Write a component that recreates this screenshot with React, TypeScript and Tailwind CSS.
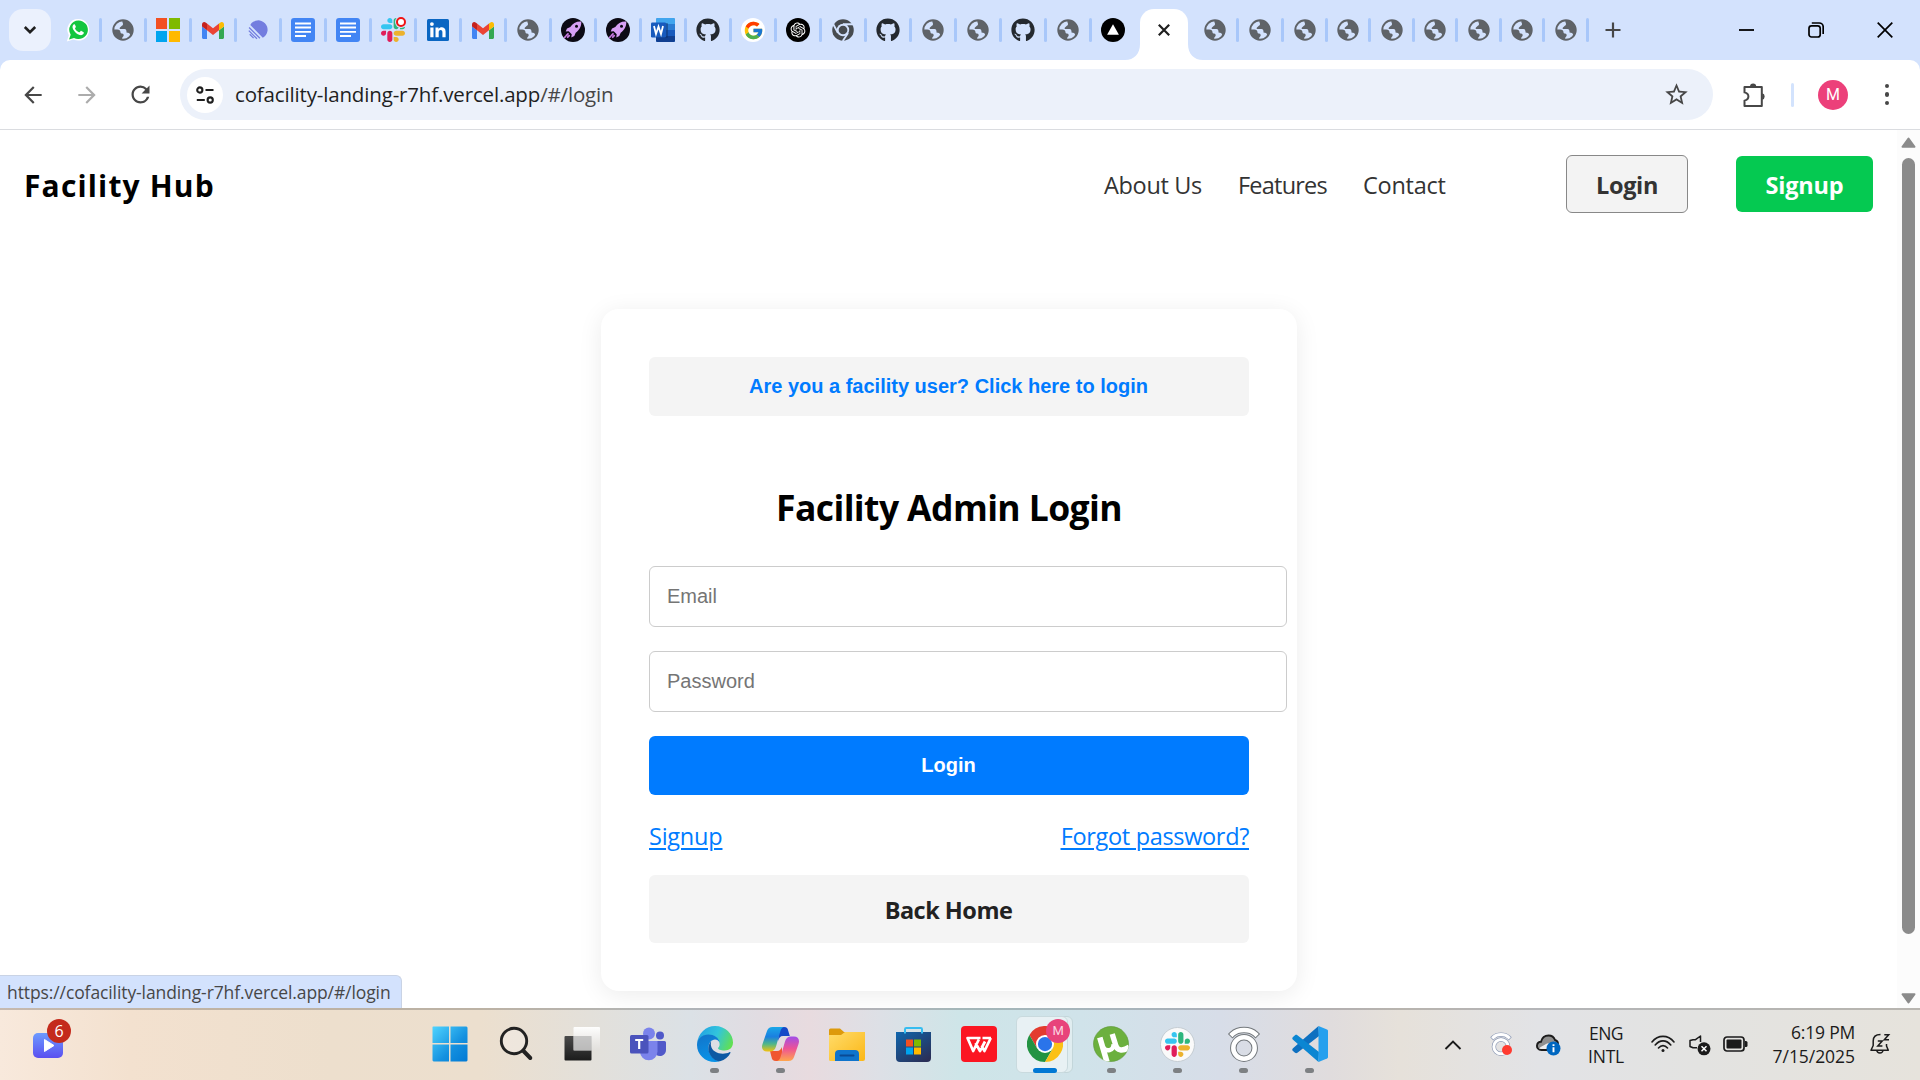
import type { ReactNode } from "react";
import { FaGithub, FaRocket } from "react-icons/fa";
import { FcGoogle } from "react-icons/fc";
import { RiOpenaiFill } from "react-icons/ri";
import { MdArrowBack, MdArrowForward, MdRefresh, MdStarOutline } from "react-icons/md";

/* ---------- favicons ---------- */

const Globe = () => (
  <svg width="22" height="22" viewBox="0 0 22 22">
    <circle cx="11" cy="11" r="9.7" fill="none" stroke="#5f6368" strokeWidth="2" />
    <path
      d="M10.6 1.2c5.6-.3 10.1 4.1 10.2 9.4.1 2.6-1 5-2.3 6.6-.2-2.2-1-3.3-2.6-3.5l-1.4-.1c.2-2-.4-3.3-2-3.5H8.6c-1 0-1.3-1-.6-1.7L9.6 6.9c1-.2 1.5-.9 1.4-2.1 0-1.3-1.3-1.7-.4-3.6z"
      fill="#5f6368"
    />
    <path
      d="M1.3 10.5h3.9c2.2 0 3.3 1.3 3.3 2.7 0 .9.6 1.2 1.5 1.2 1.2.1 1.7.8 1.7 1.9 0 1.4-1.3 1.5-1.5 2.7l-.2 1.5C4.8 20 1.3 15.7 1.3 10.5z"
      fill="#5f6368"
    />
  </svg>
);

const WhatsApp = () => (
  <svg width="24" height="24" viewBox="0 0 24 24">
    <path d="M12.5 1a10.8 10.8 0 1 1-5 20.4L.8 23.4l2-6.2A10.8 10.8 0 0 1 12.5 1z" fill="#fff" />
    <path d="M12.5 2.5a9.3 9.3 0 1 1-4.5 17.4l-5 1.6 1.7-4.8A9.3 9.3 0 0 1 12.5 2.5z" fill="#14c63f" />
    <path
      d="M9 6.8c-.4-.6-.9-.6-1.4-.2-1.4 1.2-1.4 3-.4 4.8 1.5 2.7 3.7 4.6 6.6 5.6 1.7.5 3.6-.3 4-2 .2-.8 0-.9-2.4-2.1-.4-.2-.8 0-1.5 1.1-.3.4-.6.3-1.4 0-1.7-.8-2.9-2.1-3.5-3.4-.2-.5.9-1.1.9-1.8z"
      fill="#fff"
    />
  </svg>
);

const Microsoft = () => (
  <span className="grid size-6 grid-cols-2 gap-[2px]">
    <i className="bg-[#f25022]" />
    <i className="bg-[#7fba00]" />
    <i className="bg-[#00a4ef]" />
    <i className="bg-[#ffb900]" />
  </span>
);

const Gmail = () => (
  <svg width="22" height="17" viewBox="52 42 88 66" preserveAspectRatio="none">
    <path fill="#4285f4" d="M58 108h14V74L52 59v43c0 3.32 2.69 6 6 6" />
    <path fill="#34a853" d="M120 108h14c3.32 0 6-2.69 6-6V59l-20 15" />
    <path fill="#fbbc04" d="M120 48v26l20-15v-8c0-7.42-8.47-11.65-14.4-7.2" />
    <path fill="#ea4335" d="M72 74V48l24 18 24-18v26L96 92" />
    <path fill="#c5221f" d="M52 51v8l20 15V48l-5.6-4.2c-5.94-4.45-14.4-.22-14.4 7.2" />
  </svg>
);

const Linear = () => (
  <svg width="20" height="20" viewBox="0 0 20 20">
    <path d="M2.3 4.9A9.3 9.3 0 1 1 14.8 17.8z" fill="#737ddf" />
    <path d="M1.1 7.5l10.8 10.8M.8 10.6l8.2 8.2M1.7 14.2l3.9 3.9" stroke="#737ddf" strokeWidth="1.3" />
  </svg>
);

const Docs = () => (
  <svg width="24" height="24" viewBox="0 0 24 24">
    <rect width="24" height="24" rx="3" fill="#4285f4" />
    <path d="M4 5.5h16M4 9.5h16M4 13.9h16M4 18h11" stroke="#fff" strokeWidth="1.9" />
  </svg>
);

const slackArm =
  "M25.8 77.6c0 7.1-5.8 12.9-12.9 12.9S0 84.7 0 77.6s5.8-12.9 12.9-12.9h12.9v12.9zm6.5 0c0-7.1 5.8-12.9 12.9-12.9s12.9 5.8 12.9 12.9v32.3c0 7.1-5.8 12.9-12.9 12.9s-12.9-5.8-12.9-12.9V77.6z";

const SlackMark = ({ size }: { size: number }) => (
  <svg width={size} height={size} viewBox="0 0 122.8 122.8">
    <path d={slackArm} fill="#e01e5a" />
    <path d={slackArm} fill="#36c5f0" transform="rotate(90 61.4 61.4)" />
    <path d={slackArm} fill="#2eb67d" transform="rotate(180 61.4 61.4)" />
    <path d={slackArm} fill="#ecb22e" transform="rotate(270 61.4 61.4)" />
  </svg>
);

const SlackTab = () => (
  <span className="relative flex size-6">
    <SlackMark size={24} />
    <span className="absolute -top-[1px] right-[-1px] size-[10px] rounded-full border-2 border-[#f01414] bg-white ring-1 ring-[#d3e2fd]" />
  </span>
);

const LinkedIn = () => (
  <svg width="22" height="22" viewBox="0 0 22 22">
    <rect width="22" height="22" rx="1.5" fill="#0a66c2" />
    <path d="M3.3 8.5h3.2v9.8H3.3zM8.5 8.5h3v1.4c1.6-2.6 7.1-2.5 7.1 2.6v5.8h-3.2v-5c0-3.3-3.7-3-3.7 0v5H8.5z" fill="#fff" />
    <circle cx="4.9" cy="5.1" r="1.9" fill="#fff" />
  </svg>
);

const Rocket = () => (
  <span className="flex size-6 items-center justify-center rounded-full bg-[#0c0a14]">
    <svg width="20" height="20" viewBox="0 0 20 20">
      <path d="M18.3 1.5c-5-.3-8.600 1.600-11 5.500L4 8.500l-1.300 3 3-.3 3 3-.4 3.200 3-1.400 1.400-3.300c3.700-2.600 5.800-6.200 5.600-11.200z" fill="#d7a0f5" />
      <circle cx="13.500" cy="6.300" r="1.500" fill="#0c0a14" />
      <path d="M5 13.800l-1.500 1.500M6.200 15.600l-1.500 1.600M2.500 16.500l-.9 1" stroke="#c77ae0" strokeWidth="1.800" strokeLinecap="round" />
    </svg>
  </span>
);

const Word = () => (
  <svg width="24" height="24" viewBox="0 0 24 24">
    <rect x="5" width="19" height="24" rx="1.5" fill="#2b7cd3" />
    <path d="M6.5 0h16A1.5 1.5 0 0 1 24 1.5V6H5V1.5A1.5 1.5 0 0 1 6.5 0z" fill="#41a5ee" />
    <path d="M5 12h19v6H5z" fill="#185abd" />
    <path d="M5 18h19v4.5a1.5 1.5 0 0 1-1.5 1.5h-16A1.5 1.5 0 0 1 5 22.500z" fill="#103f91" />
    <path d="M5 5h11a1 1 0 0 1 1 1v13a1 1 0 0 1-1 1H5z" fill="#0b2f6b" opacity=".5" />
    <rect y="4.5" width="15" height="15" rx="1.3" fill="#185abd" />
    <path d="M3 8l2 8 2.500-7.500L10 16l2-8" fill="none" stroke="#fff" strokeWidth="1.8" />
  </svg>
);

const Github = () => <FaGithub size={24} color="#24292f" />;

const Google = () => (
  <span className="flex size-6 items-center justify-center rounded-full bg-white">
    <FcGoogle size={21} />
  </span>
);

const OpenAI = () => (
  <span className="flex size-6 items-center justify-center rounded-full bg-black">
    <RiOpenaiFill size={18} color="#fff" />
  </span>
);

const ChromeGray = () => (
  <svg width="22" height="22" viewBox="0 0 48 48">
    <circle cx="24" cy="24" r="23.5" fill="#474b4f" />
    <circle cx="24" cy="24" r="13.5" fill="#d3e2fd" />
    <path d="M24 11.5H47M13 30.5L2.5 11M35 30.5L23.5 48" stroke="#d3e2fd" strokeWidth="4" />
    <circle cx="24" cy="24" r="9.5" fill="#474b4f" />
  </svg>
);

const Vercel = () => (
  <svg width="24" height="24" viewBox="0 0 24 24">
    <circle cx="12" cy="12" r="12" fill="#000" />
    <path d="M12 6.2l5.900 10.600H6.100z" fill="#fff" />
  </svg>
);

const leftTabs: (() => ReactNode)[] = [
  WhatsApp, Globe, Microsoft, Gmail, Linear, Docs, Docs, SlackTab, LinkedIn, Gmail, Globe, Rocket,
  Rocket, Word, Github, Google, OpenAI, ChromeGray, Github, Globe, Globe, Github, Globe, Vercel,
];
const rightTabs = [45, 45, 44, 43, 44, 43, 44, 43, 44];

function TabStrip() {
  return (
    <div className="flex h-[60px] bg-[#d3e2fd]">
      <div className="mt-[9px] ml-[9px] flex size-[42px] items-center justify-center rounded-[14px] bg-[#ebf1fd]">
        <svg width="14" height="10" viewBox="0 0 14 10">
          <path d="M1.8 2L7 7.2 12.2 2" fill="none" stroke="#1f1f1f" strokeWidth="2.6" />
        </svg>
      </div>
      <div className="ml-[6px] flex items-center">
        {leftTabs.map((Icon, i) => (
          <div key={i} className="flex w-[45px] items-center">
            <div className="flex w-[42px] justify-center">
              <Icon />
            </div>
            {i < leftTabs.length - 1 && <div className="h-6 w-[3px] rounded-full bg-[#a8c7fa]" />}
          </div>
        ))}
      </div>
      <div className="relative mt-[9px] ml-[3px] flex h-[51px] w-[48px] items-center justify-center rounded-t-[14px] bg-white pb-[9px]">
        <svg width="12" height="12" viewBox="0 0 12 12">
          <path d="M.8.8l10.400 10.400M11.200.8L.8 11.200" stroke="#1f1f1f" strokeWidth="2.2" />
        </svg>
        <svg className="absolute bottom-0 -left-[15px]" width="15" height="16" viewBox="0 0 15 16">
          <path d="M15 0v16H0C9 16 15 10 15 0z" fill="#fff" />
        </svg>
        <svg className="absolute -right-[15px] bottom-0" width="15" height="16" viewBox="0 0 15 16">
          <path d="M0 0v16h15C6 16 0 10 0 0z" fill="#fff" />
        </svg>
      </div>
      <div className="ml-[6px] flex items-center">
        {rightTabs.map((w, i) => (
          <div key={i} className="flex items-center" style={{ width: w }}>
            <div className="flex flex-1 justify-center">
              <Globe />
            </div>
            <div className="h-6 w-[3px] rounded-full bg-[#a8c7fa]" />
          </div>
        ))}
      </div>
      <div className="flex w-[48px] items-center justify-center">
        <svg width="16" height="16" viewBox="0 0 16 16">
          <path d="M8 .5v15M.5 8h15" stroke="#474747" strokeWidth="2.2" />
        </svg>
      </div>
      <div className="mr-px ml-auto flex h-[59px] items-center">
        <div className="flex w-[69px] justify-center">
          <svg width="15" height="16" viewBox="0 0 15 16">
            <path d="M0 8h15" stroke="#000" strokeWidth="1.8" />
          </svg>
        </div>
        <div className="flex w-[69px] justify-center">
          <svg width="16" height="16" viewBox="0 0 16 16" fill="none" stroke="#000" strokeWidth="1.7">
            <rect x="1" y="3.8" width="11.2" height="11.2" rx="2.5" />
            <path d="M3.8 1h7.400a4 4 0 0 1 4 4v7" />
          </svg>
        </div>
        <div className="flex w-[69px] justify-center">
          <svg width="16" height="16" viewBox="0 0 16 16">
            <path d="M.7.7l14.600 14.600M15.300.7L.7 15.300" stroke="#000" strokeWidth="1.7" />
          </svg>
        </div>
      </div>
    </div>
  );
}

function Toolbar() {
  return (
    <div className="h-[70px] bg-[#d3e2fd]">
      <div className="flex h-[70px] items-center rounded-t-[10px] border-b border-[#dadce0] bg-white pl-[9px]">
        <div className="flex w-12 justify-center">
          <MdArrowBack size={26} color="#474747" />
        </div>
        <div className="flex w-[60px] justify-center">
          <MdArrowForward size={26} color="#acacac" />
        </div>
        <div className="flex w-12 justify-center pr-px">
          <MdRefresh size={27} color="#474747" />
        </div>
        <div className="ml-[15px] flex h-[51px] w-[1533px] items-center rounded-full bg-[#ecf1fa] pl-[7px]">
          <div className="flex size-9 items-center justify-center rounded-full bg-white">
            <svg width="18" height="18" viewBox="0 0 18 18" fill="none" stroke="#1f1f1f" strokeWidth="2.1">
              <circle cx="3.8" cy="4" r="2.6" />
              <path d="M9.5 4H17.500M.8 14h8" />
              <circle cx="14.200" cy="14" r="2.600" />
            </svg>
          </div>
          <div className="ml-3 flex-1 pb-px text-[20.5px] leading-7 tracking-[-0.16px] text-[#1f1f1f]">
            cofacility-landing-r7hf.vercel.app<span className="text-[#474747]">/#/login</span>
          </div>
          <div className="flex w-[73px] justify-center">
            <MdStarOutline size={27} color="#474747" />
          </div>
        </div>
        <div className="flex w-[78px] justify-center pl-1">
          <svg width="26" height="26" viewBox="0 0 26 26">
            <path
              d="M3.5 5h17.300v19H3.500v-5.400c5.200-1.200 5.200-7 0-8.200z"
              fill="none"
              stroke="#474747"
              strokeWidth="2"
              strokeLinejoin="round"
            />
            <path d="M9 4.500a3.100 3.100 0 0 1 6.200 0zM21.200 11.300a3.300 3.300 0 0 1 0 6.400z" fill="#474747" />
          </svg>
        </div>
        <div className="h-6 w-[3px] rounded-full bg-[#d3e3fd]" />
        <div className="flex w-[78px] justify-center">
          <div className="flex size-[30px] items-center justify-center rounded-full bg-[#ec407a] font-[Roboto] text-[16px] text-white">
            M
          </div>
        </div>
        <div className="flex w-[30px] flex-col items-center gap-[4px]">
          <i className="size-[4.5px] rounded-full bg-[#474747]" />
          <i className="size-[4.5px] rounded-full bg-[#474747]" />
          <i className="size-[4.5px] rounded-full bg-[#474747]" />
        </div>
      </div>
    </div>
  );
}

/* ---------- page ---------- */

function Page() {
  return (
    <div className="flex h-[878px] overflow-hidden bg-white">
      <div className="flex w-[1897px] flex-col">
        <header className="flex h-[108px] shrink-0 items-center pl-6 text-[23.5px] text-[#333]">
          <div className="pt-[2px] text-[30px] font-bold tracking-[1.15px] text-black">Facility Hub</div>
          <nav className="ml-auto flex gap-9 pt-1">
            <a className="w-[98px] tracking-[-0.33px] whitespace-nowrap">About Us</a>
            <a className="w-[89px] tracking-[-0.78px]">Features</a>
            <a className="w-[82px] tracking-[-0.27px]">Contact</a>
          </nav>
          <button className="ml-[121px] flex h-[58px] w-[122px] items-center justify-center rounded-[6px] border border-[#888] bg-[#f3f3f3] pt-1 font-bold tracking-[-0.35px]">
            Login
          </button>
          <button className="mr-6 ml-12 flex h-[56px] w-[137px] items-center justify-center rounded-[6px] bg-[#05c951] pt-1 font-bold tracking-[-0.2px] text-white">
            Signup
          </button>
        </header>

        <main className="mt-[71px] ml-[601px] h-[682px] w-[696px] shrink-0 rounded-[18px] bg-white p-12 font-['Liberation_Sans',sans-serif] text-[20px] shadow-[0_4px_24px_rgba(0,0,0,0.08)]">
          <button className="flex h-[59px] w-full items-center justify-center rounded-[6px] bg-[#f4f4f4] pr-px pb-[2px] font-bold text-[#007bff]">
            Are you a facility user? Click here to login
          </button>
          <h2 className="mt-[67px] mb-[35px] text-center font-['Open_Sans',sans-serif] text-[35.5px] leading-[48px] font-bold tracking-[-0.6px] text-black">
            Facility Admin Login
          </h2>
          <div className="flex h-[61px] w-[638px] items-center rounded-[6px] border border-[#ccc] px-[17px] pb-[2px] text-[#757575]">
            Email
          </div>
          <div className="mt-6 flex h-[61px] w-[638px] items-center rounded-[6px] border border-[#ccc] px-[17px] pb-[2px] text-[#757575]">
            Password
          </div>
          <button className="mt-6 flex h-[59px] w-full items-center justify-center rounded-[6px] bg-[#007bff] pr-px pb-[2px] font-bold text-white">
            Login
          </button>
          <div className="mt-[25px] mb-[23px] flex justify-between font-['Open_Sans',sans-serif] text-[23.5px] leading-8 text-[#007bff] underline decoration-2 underline-offset-[3px]">
            <a className="tracking-[-0.25px]">Signup</a>
            <a className="tracking-[-0.33px]">Forgot password?</a>
          </div>
          <button className="flex h-[68px] w-full items-center justify-center rounded-[6px] bg-[#f4f4f4] pt-1 pr-px font-['Open_Sans',sans-serif] text-[23.5px] font-bold tracking-[-0.5px] text-[#222]">
            Back Home
          </button>
        </main>
      </div>

      <div className="flex w-[23px] flex-col items-center bg-[#fcfcfc] pt-[7px] pb-1">
        <svg width="15" height="11" viewBox="0 0 15 11">
          <path d="M7.5 1.500L13.500 9.800H1.500z" fill="#8b8b8b" stroke="#8b8b8b" strokeWidth="2" strokeLinejoin="round" />
        </svg>
        <div className="mt-[10px] h-[776px] w-[13px] rounded-full bg-[#8b8b8b]" />
        <svg className="mt-auto" width="15" height="11" viewBox="0 0 15 11">
          <path d="M7.500 9.500L1.500 1.200h12z" fill="#8b8b8b" stroke="#8b8b8b" strokeWidth="2" strokeLinejoin="round" />
        </svg>
      </div>
    </div>
  );
}

/* ---------- taskbar ---------- */

const WinLogo = () => (
  <svg width="36" height="36" viewBox="0 0 36 36">
    <defs>
      <linearGradient id="win" x1="0" y1="0" x2="36" y2="36" gradientUnits="userSpaceOnUse">
        <stop stopColor="#50d5ff" />
        <stop offset=".6" stopColor="#1490df" />
        <stop offset="1" stopColor="#0078d4" />
      </linearGradient>
    </defs>
    <path d="M1 .5h16v16.500H.5V1zM18.500.5h16l1 1V17h-17zM.5 18.500h16.500v17H1.500l-1-1zM18.500 18.500h17v16l-1 1h-16z" fill="url(#win)" />
  </svg>
);

const SearchIcon = () => (
  <svg width="36" height="36" viewBox="0 0 36 36">
    <circle cx="16" cy="15" r="12.700" fill="#f2ebe4" fillOpacity=".6" stroke="#222" strokeWidth="2.900" />
    <path d="M25.500 25l6.800 7" stroke="#222" strokeWidth="4" strokeLinecap="round" />
  </svg>
);

const TaskView = () => (
  <svg width="36" height="36" viewBox="0 0 36 36">
    <defs>
      <linearGradient id="tv1" x1="0" y1="0" x2="0" y2="1">
        <stop stopColor="#4a4a4a" />
        <stop offset="1" stopColor="#1c1c1c" />
      </linearGradient>
      <linearGradient id="tv2" x1="0" y1="0" x2="0" y2="1">
        <stop stopColor="#fff" stopOpacity=".95" />
        <stop offset="1" stopColor="#e2e0dd" stopOpacity=".75" />
      </linearGradient>
    </defs>
    <rect x=".5" y="10" width="27" height="24.500" rx="1" fill="url(#tv1)" />
    <rect x="9.500" y="1" width="26.500" height="23.500" rx="1" fill="url(#tv2)" />
    <path d="M9.500 10h18v14.500h-18z" fill="#bcbcbc" fillOpacity=".75" />
  </svg>
);

const Teams = () => (
  <svg width="36" height="34" viewBox="0 0 36 34">
    <circle cx="19" cy="6.500" r="6" fill="#7b83eb" />
    <circle cx="30" cy="8.500" r="4" fill="#5059c9" />
    <path d="M26 14h8.500a1.500 1.500 0 0 1 1.500 1.500V23a6 6 0 0 1-10 4.500z" fill="#5059c9" />
    <path d="M10 14h17.500v10.500a8.700 8.700 0 0 1-17.500 0z" fill="#7b83eb" />
    <rect x="0" y="8" width="18.500" height="18.500" rx="1.500" fill="#4b53bc" />
    <path d="M5.200 13h8M9.200 13v9" stroke="#fff" strokeWidth="2.200" />
  </svg>
);

const Edge = () => (
  <svg width="36" height="36" viewBox="0 0 36 36">
    <defs>
      <linearGradient id="e1" x1="0" y1="0" x2="36" y2="16" gradientUnits="userSpaceOnUse">
        <stop stopColor="#1f9be5" />
        <stop offset=".55" stopColor="#32c5dc" />
        <stop offset="1" stopColor="#62e050" />
      </linearGradient>
      <linearGradient id="e2" x1="0" y1="0" x2=".3" y2="1">
        <stop stopColor="#1273c9" />
        <stop offset="1" stopColor="#0a92e6" />
      </linearGradient>
    </defs>
    <path d="M0 18C1 7 9 0 18 0c10.500 0 18 8 18 16.500 0 5-3.500 8-8.500 8-4 0-6.500-1-6.500-2.500 1.500-1.500 1.800-3 1.500-4.500C22 12 17 9 12 9 5 9 1 13 0 18z" fill="url(#e1)" />
    <path d="M0 19C0 13 5 8.500 11.500 8.500c5.500 0 10.500 3 11 8-1-2-2.500-3-4.500-3-3.500 0-6.500 3.500-6.500 8.500 0 7 6 12.500 11 13.300-1.500.5-3 .7-4.500.7C8 36 0 28.500 0 19z" fill="url(#e2)" />
    <path d="M14.300 15.500C11 18 10.500 24 13 28.500c2.500 4.500 6.500 7 10 6.800 5-1.300 8.500-4.500 10.400-8.300.3-.8-.3-1.200-1-.8-6.500 3.300-17.500 1-18.500-7-.1-1.500 0-2.500.4-3.700z" fill="#0c59a4" />
  </svg>
);

const Copilot = () => (
  <svg width="37" height="34" viewBox="0 0 37 34">
    <defs>
      <linearGradient id="c1" x1="0" y1="0" x2="0" y2="1">
        <stop stopColor="#1aa7e8" />
        <stop offset=".4" stopColor="#1a7fe0" />
        <stop offset=".7" stopColor="#52b788" />
        <stop offset="1" stopColor="#f4c20d" />
      </linearGradient>
      <linearGradient id="c2" x1="0" y1="0" x2="0" y2="1">
        <stop stopColor="#a14de8" />
        <stop offset=".5" stopColor="#ee5494" />
        <stop offset="1" stopColor="#ffa64d" />
      </linearGradient>
    </defs>
    <path d="M17 0h5c3 0 3.700 1.500 4.300 4l1.500 5H21c-3 0-4 2-5 5z" fill="#1548c8" />
    <path d="M20 34h-6c-3 0-4-1.500-4.500-4L8 24h7c3 0 4-2 5-4z" fill="#f0562f" />
    <path d="M10.500 0H22c-2 .5-3 2-3.700 4.500L14 19.500C13 23 11 24.500 8 24.500H5c-4 0-6-3-4.500-7.500L5 4c1-2.700 2.500-4 5.500-4z" fill="url(#c1)" />
    <path d="M26.500 34H15c2-.5 3-2 3.700-4.500L23 14.500C24 11 26 9.500 29 9.500h3c4 0 6 3 4.500 7.500L32 30c-1 2.700-2.500 4-5.500 4z" fill="url(#c2)" />
  </svg>
);

const Explorer = () => (
  <svg width="36" height="33" viewBox="0 0 36 33">
    <defs>
      <linearGradient id="f1" x1="0" y1="0" x2="1" y2="1">
        <stop stopColor="#ffdc6b" />
        <stop offset="1" stopColor="#fbb716" />
      </linearGradient>
    </defs>
    <path d="M0 2a1.500 1.500 0 0 1 1.500-1.500H11l4 3.500h19a2 2 0 0 1 2 2v5H0z" fill="#dd9a0c" />
    <path d="M0 7h12l4-3h20v27a2 2 0 0 1-2 2H1.500A1.500 1.500 0 0 1 0 31.500z" fill="url(#f1)" />
    <path d="M6 33v-7a4 4 0 0 1 4-4h16a4 4 0 0 1 4 4v7z" fill="#0f74cc" />
    <path d="M11.500 27.500h13" stroke="#0a4a94" strokeWidth="2" strokeLinecap="round" />
  </svg>
);

const Store = () => (
  <svg width="35" height="35" viewBox="0 0 35 35">
    <defs>
      <linearGradient id="s1" x1="0" y1="0" x2=".8" y2="1">
        <stop stopColor="#0f66ad" />
        <stop offset="1" stopColor="#2a2f57" />
      </linearGradient>
    </defs>
    <path d="M9 8V2.300C9 1.500 9.500 1 10.300 1h14.400c.8 0 1.300.5 1.300 1.300V8" fill="none" stroke="#36bdf0" strokeWidth="2" />
    <path d="M0 5h35v26a4 4 0 0 1-4 4H4a4 4 0 0 1-4-4z" fill="url(#s1)" />
    <path d="M9 2.500v4M26 2.500v4" stroke="#36bdf0" strokeWidth="2" />
    <path d="M10 12.500h7v7h-7z" fill="#f25022" />
    <path d="M18 12.500h7v7h-7z" fill="#7fba00" />
    <path d="M10 20.500h7v7h-7z" fill="#00a4ef" />
    <path d="M18 20.500h7v7h-7z" fill="#ffb900" />
  </svg>
);

const Wps = () => (
  <svg width="36" height="36" viewBox="0 0 36 36">
    <rect width="36" height="36" rx="4" fill="#fb1622" />
    <path
      d="M19.500 12H6.500l5.700 13 5.600-11.500M14.500 17l4.500 8 5-9.500M30 12h-8.500M20.500 20l3 5L29.800 12"
      fill="none"
      stroke="#fff"
      strokeWidth="2.700"
      strokeLinejoin="round"
    />
  </svg>
);

const Chrome = () => (
  <svg width="36" height="36" viewBox="0 0 48 48">
    <path d="M24 12h20.800A24 24 0 0 0 3.200 12l10.400 18z" fill="#e33b2e" />
    <path d="M3.200 12A24 24 0 0 0 24 48l10.400-18H13.600z" fill="#229342" />
    <path d="M24 48a24 24 0 0 0 20.800-36H24l10.400 18z" fill="#fbc116" />
    <circle cx="24" cy="24" r="12" fill="#fff" />
    <circle cx="24" cy="24" r="9.500" fill="#2a74ea" />
  </svg>
);

const Utorrent = () => (
  <svg width="36" height="36" viewBox="0 0 36 36">
    <defs>
      <clipPath id="ut">
        <circle cx="18" cy="18" r="17.800" />
      </clipPath>
    </defs>
    <circle cx="18" cy="18" r="17.500" fill="#6cb03e" stroke="#5a9434" strokeWidth=".6" />
    <g clipPath="url(#ut)" fill="none" stroke="#fff">
      <path d="M6.800 11.500L14 36" strokeWidth="5.600" />
      <path d="M10.500 21.500c2.500 4.500 10.500 3.500 10-3.500" strokeWidth="4.500" />
      <path d="M19.200 8l3.600 11.500c1.300 4.500 6.200 6.500 13.500 1.500" strokeWidth="5.400" />
    </g>
  </svg>
);

const SlackApp = () => (
  <span className="flex size-[35px] items-center justify-center rounded-full border border-[#c5cdd3] bg-[#fafafa]">
    <SlackMark size={25} />
  </span>
);

const ArcRing = ({ s = 36, line = "#74797d" }: { s?: number; line?: string }) => (
  <svg width={s} height={s} viewBox="0 0 36 36" fill="none">
    <path d="M6.500 8C12 2.500 24 2.500 29.500 8" stroke={line} strokeWidth="6.500" strokeLinecap="square" strokeLinejoin="round" />
    <path d="M6.500 8C12 2.500 24 2.500 29.500 8" stroke="#fff" strokeWidth="4.500" strokeLinecap="square" />
    <circle cx="18" cy="22" r="10.700" stroke={line} strokeWidth="6.500" />
    <circle cx="18" cy="22" r="10.700" stroke="#fff" strokeWidth="4.500" />
  </svg>
);

const VsCode = () => (
  <svg width="36" height="36" viewBox="0 0 36 36">
    <path d="M26.500 0L1 22.200c-1 1-1 2 0 2.800l2 1.700c.8.6 1.600.6 2.400 0L27 10z" fill="#0e70c0" />
    <path d="M26.500 36L1 13.800c-1-1-1-2 0-2.800l2-1.700c.8-.6 1.600-.6 2.400 0L27 26z" fill="#0b86d2" />
    <path d="M26.500 0L35 3.500c.7.300 1 .8 1 1.500v26c0 .7-.3 1.200-1 1.500L26.500 36z" fill="#25a0ee" />
  </svg>
);

type AppEntry = { icon: () => ReactNode; mark?: "gray" | "blue" };
const apps: AppEntry[] = [
  { icon: WinLogo },
  { icon: SearchIcon },
  { icon: TaskView },
  { icon: Teams },
  { icon: Edge, mark: "gray" },
  { icon: Copilot, mark: "gray" },
  { icon: Explorer },
  { icon: Store },
  { icon: Wps },
  { icon: Chrome, mark: "blue" },
  { icon: Utorrent, mark: "gray" },
  { icon: SlackApp, mark: "gray" },
  { icon: () => <ArcRing />, mark: "gray" },
  { icon: VsCode, mark: "gray" },
];

function TaskApp({ icon: Icon, mark }: AppEntry) {
  return (
    <div className="relative flex h-[70px] w-[66.15px] items-center justify-center pb-[2px]">
      {mark === "blue" && (
        <>
          <span className="absolute top-[6px] right-[5px] h-[57px] w-12 rounded-[6px] border border-[#c3d6da] bg-[#e0edf0]" />
          <span className="absolute top-[6px] left-[4px] h-[57px] w-[52px] rounded-[6px] border border-[#c9dade] bg-[#e8f1f4]" />
        </>
      )}
      <span className="relative flex">
        <Icon />
      </span>
      {mark === "blue" && (
        <>
          <span className="absolute top-[9px] left-[34px] flex size-6 items-center justify-center rounded-full bg-[#e8437b] font-[Roboto] text-[13px] text-[#fbd3e0]">
            M
          </span>
          <span className="absolute bottom-[7px] h-[5px] w-6 rounded-full bg-[#0078d4]" />
        </>
      )}
      {mark === "gray" && <span className="absolute bottom-[7px] h-[5px] w-[9px] rounded-full bg-[#7d8083]" />}
    </div>
  );
}

function Tray() {
  return (
    <div className="ml-auto flex h-full items-center text-[17.5px] leading-[23px] text-[#1b1b1b]">
      <div className="flex w-[42px] justify-center">
        <svg width="18" height="10" viewBox="0 0 18 10">
          <path d="M1.500 9L9 1.500 16.500 9" fill="none" stroke="#1b1b1b" strokeWidth="1.900" />
        </svg>
      </div>
      <div className="flex w-[54px] justify-center pb-[2px]">
        <span className="relative flex">
          <ArcRing s={24} line="#8d9ab5" />
          <span className="absolute right-[1px] bottom-[1px] size-[10px] rounded-full bg-[#ff3b30]" />
        </span>
      </div>
      <div className="flex w-10 justify-center">
        <svg width="25" height="22" viewBox="0 0 25 22">
          <path
            d="M5.500 16C2 16 .8 13.500 1 11.500c.3-2.500 2-3.800 4-3.800C6 4 9 1.500 12.500 1.500c3.200 0 5.500 1.500 6.500 4.500 2 .5 3 2 3 4v3l-9 3z"
            fill="#8f8f8f"
            stroke="#1b1b1b"
            strokeWidth="1.900"
          />
          <path d="M3 14.500c2-2.500 5-3 7-4.500 2.500-1.500 5-1 7-.5l-5 5.500H5z" fill="#eee" />
          <circle cx="17.500" cy="14.500" r="7" fill="#0067c0" />
          <path d="M17.500 13.300v5M17.500 10.300v1.800" stroke="#fff" strokeWidth="1.900" />
        </svg>
      </div>
      <div className="flex w-[76px] flex-col items-center">
        <span className="tracking-[-0.6px]">ENG</span>
        <span className="tracking-[-0.25px]">INTL</span>
      </div>
      <div className="flex w-[38px] justify-center pb-[2px]">
        <svg width="24" height="18" viewBox="0 0 24 18" fill="none" stroke="#1b1b1b" strokeWidth="1.600" strokeLinecap="round">
          <path d="M1 7c6-7.500 16-7.500 22 0M4.200 10c4.600-5.500 11-5.500 15.600 0M7.500 13c2.700-3.200 6.300-3.200 9 0" />
          <circle cx="12" cy="15.500" r="1.500" fill="#1b1b1b" stroke="none" />
        </svg>
      </div>
      <div className="flex w-9 justify-center">
        <svg width="22" height="22" viewBox="0 0 22 22">
          <path d="M8 13.800H4L1 12.500v-6l3-.8h2.500L11.500 2v6" fill="none" stroke="#1b1b1b" strokeWidth="1.500" strokeLinejoin="round" />
          <circle cx="15" cy="14.800" r="6.500" fill="#1b1b1b" />
          <path d="M12.500 12.300l5 5M17.500 12.300l-5 5" stroke="#fff" strokeWidth="1.500" />
        </svg>
      </div>
      <div className="flex w-[34px] justify-center pb-[2px]">
        <svg width="25" height="16" viewBox="0 0 25 16">
          <rect x="1" y="1" width="20" height="14" rx="3" fill="none" stroke="#1b1b1b" strokeWidth="1.700" />
          <rect x="3.500" y="3.500" width="15" height="9" rx="1" fill="#1b1b1b" />
          <path d="M22 5h1a1.500 1.500 0 0 1 1.500 1.500v3A1.500 1.500 0 0 1 23 11h-1z" fill="#1b1b1b" />
        </svg>
      </div>
      <div className="flex w-[103px] flex-col items-end pb-[3px] leading-6">
        <span className="tracking-[-0.2px]">6:19 PM</span>
        <span className="tracking-[-0.05px]">7/15/2025</span>
      </div>
      <div className="mr-4 flex w-[49px] justify-center pb-[2px]">
        <svg width="22" height="22" viewBox="0 0 22 22" fill="none" stroke="#1b1b1b" strokeWidth="1.500">
          <path d="M11.500 1.500C7 1.500 4.200 4 4.200 8v4.500L2 17.200h17.300l-1.800-4.200v-2" strokeLinejoin="round" />
          <path d="M7.800 17.500c.4 3.300 5.700 3.300 6.200 0M8.800 8h4.400l-4.400 5h4.600M15.300 1.800h4.400l-4.400 5h4.700" />
        </svg>
      </div>
    </div>
  );
}

function Taskbar() {
  return (
    <div className="flex h-[72px] border-t-2 border-[#00000033] bg-[linear-gradient(90deg,#f8e9dc_0px,#f3e1cf_130px,#eddfcd_330px,#ecdfce_480px,#e3e0da_590px,#dbe1e6_690px,#e1dce2_760px,#e8dbdf_810px,#dde0e6_880px,#cee5e8_960px,#d0e3ea_1080px,#d7dde8_1220px,#e0dcdd_1330px,#e6e1da_1400px,#e2e3e6_1540px,#e3e3e1_1700px,#e6e3dc_1920px)]">
      <div className="flex w-[417px] items-center pl-[33px]">
        <span className="relative flex">
          <svg width="30" height="25" viewBox="0 0 30 25">
            <defs>
              <linearGradient id="clip" x1="0" y1="0" x2="0" y2="1">
                <stop stopColor="#6d9bff" />
                <stop offset="1" stopColor="#5b4ff0" />
              </linearGradient>
            </defs>
            <rect width="30" height="25" rx="5" fill="url(#clip)" />
            <path d="M11.500 6.500v12L21 12.500z" fill="#fff" stroke="#fff" strokeLinejoin="round" />
          </svg>
          <span className="absolute -top-[14px] left-[14px] flex size-6 items-center justify-center rounded-full bg-[#c42b1c] text-[16px] text-white">
            6
          </span>
        </span>
      </div>
      <div className="flex">
        {apps.map((a, i) => (
          <TaskApp key={i} {...a} />
        ))}
      </div>
      <Tray />
    </div>
  );
}

export default function App() {
  return (
    <div className="relative h-[1080px] w-[1920px] overflow-hidden bg-white font-['Open_Sans',sans-serif]">
      <TabStrip />
      <Toolbar />
      <Page />
      <div className="absolute bottom-[72px] left-0 flex h-[33px] w-[402px] items-center rounded-tr-[6px] border-t border-r border-[#c9d3e5] bg-[#d3e2fd] pl-[7px] text-[17.5px] tracking-[-0.1px] text-[#474747]">
        https://cofacility-landing-r7hf.vercel.app/#/login
      </div>
      <Taskbar />
    </div>
  );
}
